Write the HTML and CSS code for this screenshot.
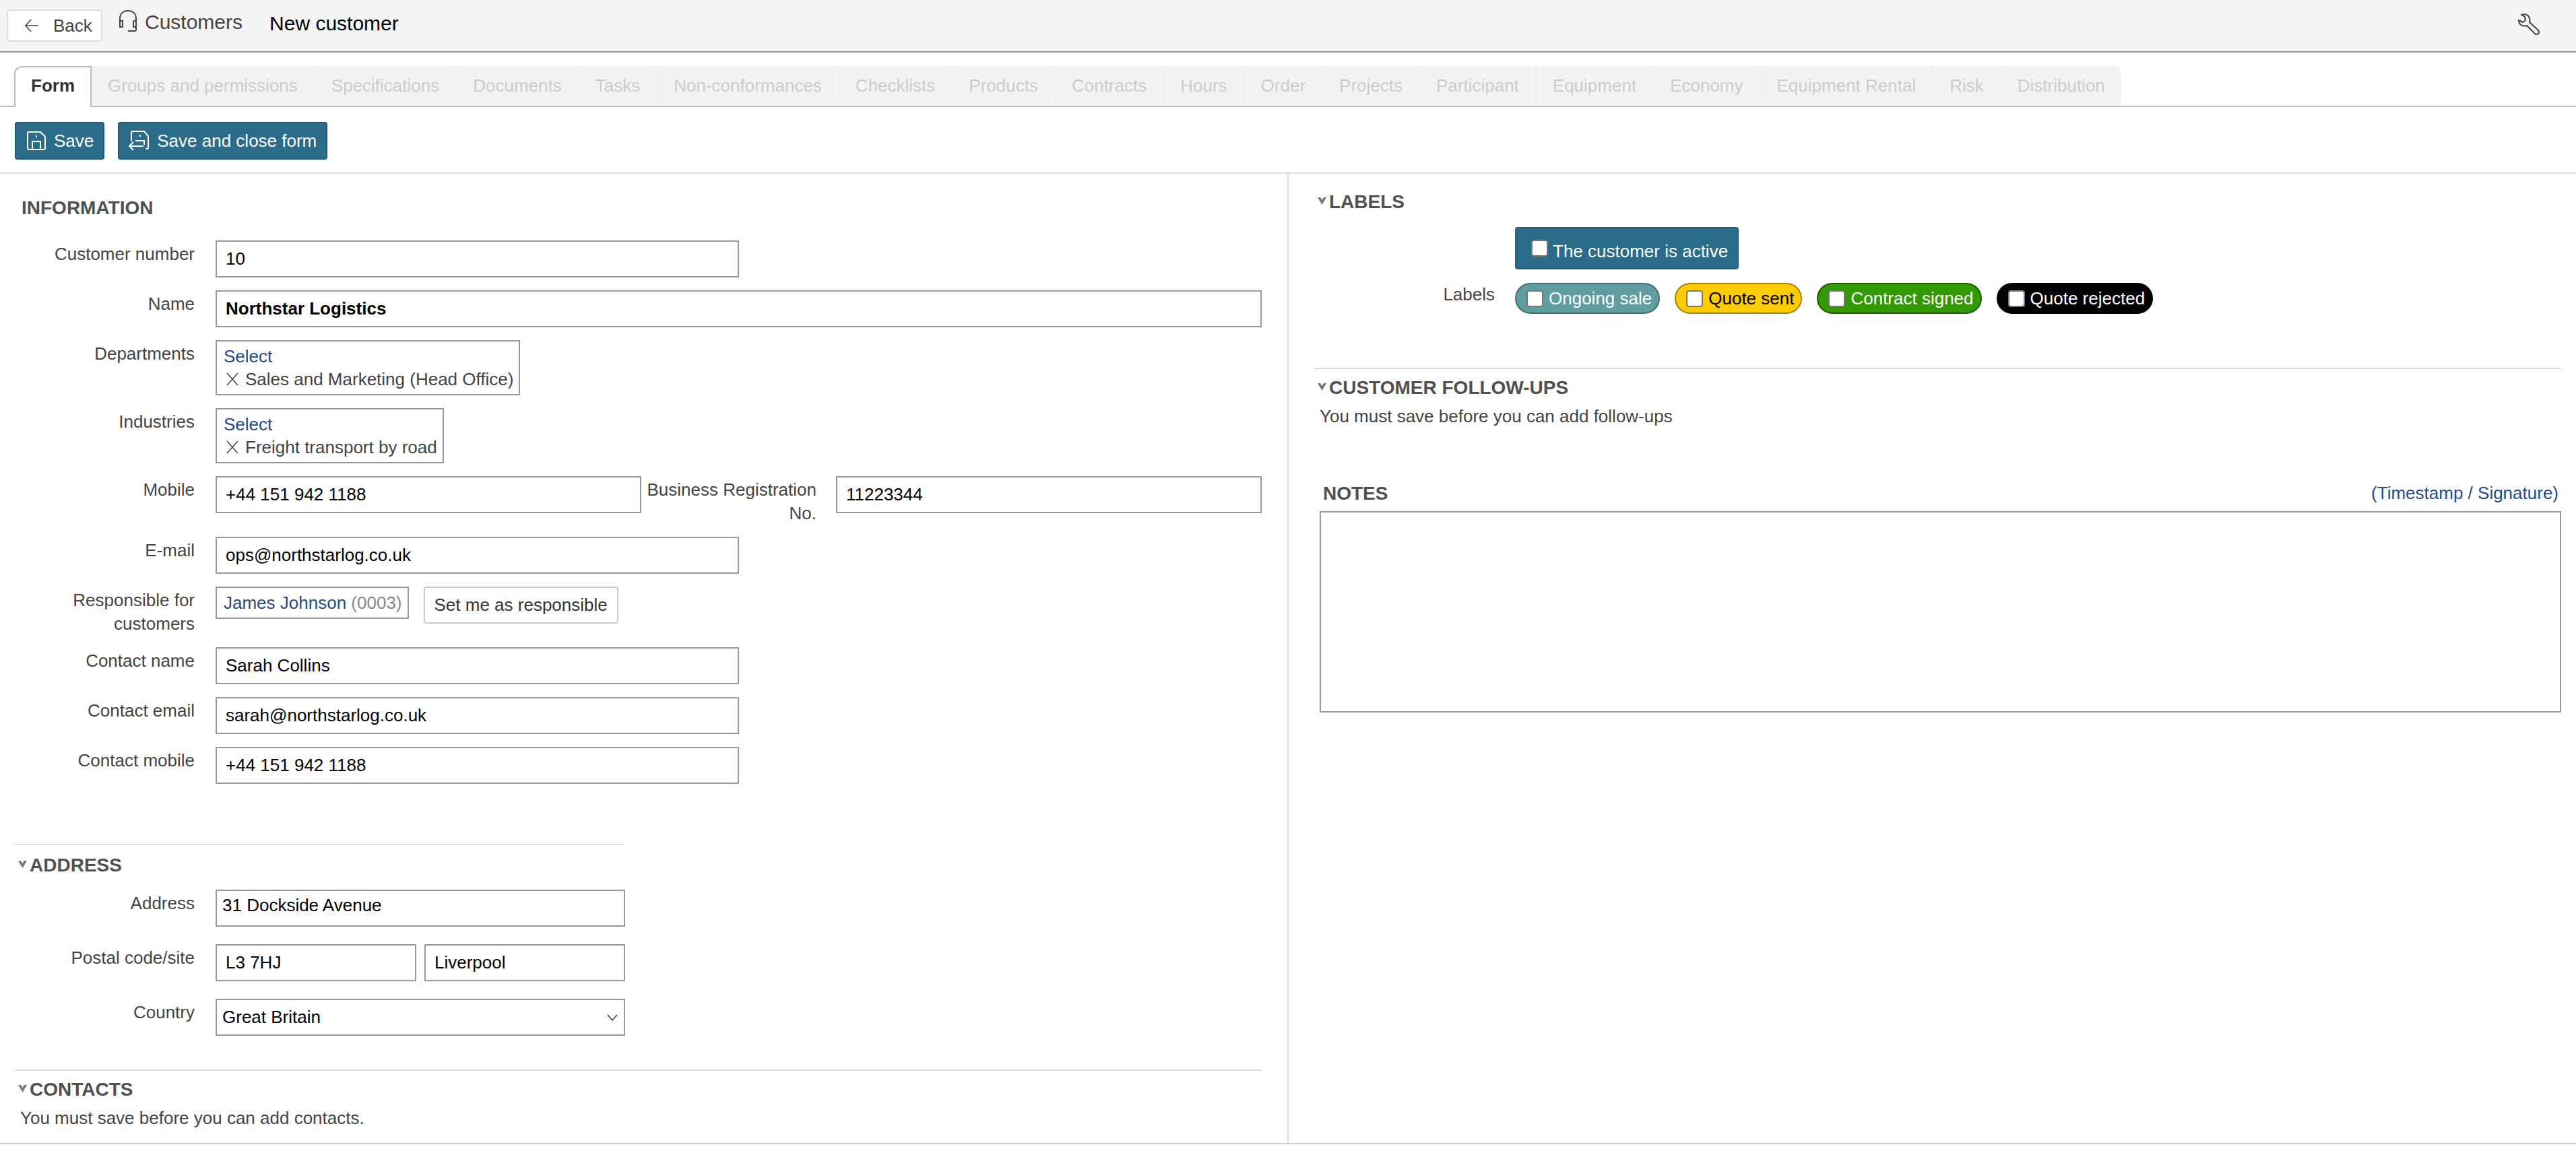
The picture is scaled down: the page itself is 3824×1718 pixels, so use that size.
FILE: index.html
```html
<!DOCTYPE html>
<html lang="en">
<head>
  <meta charset="UTF-8">
  <meta name="viewport" content="width=device-width, initial-scale=1.0">
  <title>New customer</title>
  <link rel="stylesheet" href="styles.css">
</head>
<body>
  <header class="topbar">
    <button class="back-btn">
      <svg class="icon-back" width="20" height="20" viewBox="0 0 20 20"><path d="M9 1 L1 10 L9 19 M1 10 H20" fill="none" stroke="#444" stroke-width="1.6"/></svg>
      Back
    </button>
    <svg class="icon-headset" width="28" height="32" viewBox="0 0 28 32"><path d="M2 16 V13 C2 5 7 1 14 1 C21 1 26 5 26 13 V16 M2 16 H6 V25 H2 Z M22 16 H26 V29 C26 30 25 31 24 31 H14" fill="none" stroke="#444" stroke-width="2"/><path d="M26 25 H22 V16" fill="none" stroke="#444" stroke-width="2"/></svg>
    <span class="module-title">Customers</span>
    <span class="page-title">New customer</span>
    <svg class="icon-wrench" width="32" height="32" viewBox="0 0 32 32"><path d="M1 10 L7 13 L11 10 L10 5 L5 2 C10 0 16 2 17 7 C18 10 17 12 17 13 L30 25 C32 27 31 29 30 30 C29 31 27 32 25 30 L13 18 C9 19 5 18 3 16 C1 14 1 12 1 10 Z" fill="none" stroke="#444" stroke-width="2" stroke-linejoin="round"/></svg>
  </header>

  <nav class="tabs">
    <a class="tab active">Form</a>
    <a class="tab">Groups and permissions</a>
    <a class="tab">Specifications</a>
    <a class="tab">Documents</a>
    <a class="tab">Tasks</a>
    <a class="tab">Non-conformances</a>
    <a class="tab">Checklists</a>
    <a class="tab">Products</a>
    <a class="tab">Contracts</a>
    <a class="tab">Hours</a>
    <a class="tab">Order</a>
    <a class="tab">Projects</a>
    <a class="tab">Participant</a>
    <a class="tab">Equipment</a>
    <a class="tab">Economy</a>
    <a class="tab">Equipment Rental</a>
    <a class="tab">Risk</a>
    <a class="tab">Distribution</a>
  </nav>

  <div class="toolbar">
    <button class="btn">
      <svg width="28" height="28" viewBox="0 0 28 28"><path d="M1 3 C1 2 2 1 3 1 H20 L27 8 V25 C27 26 26 27 25 27 H3 C2 27 1 26 1 25 Z M8 27 V15 H20 V27 M14 6 V9" fill="none" stroke="#fff" stroke-width="2"/></svg>
      Save
    </button>
    <button class="btn btn-close">
      <svg width="30" height="30" viewBox="0 0 30 30"><path d="M4 16 V3 C4 2 5 1 6 1 H23 L29 8 V25 C29 26 28 27 27 27 H25 M17 6 V9 M10 15 H23 V21 M1 23 H22 M7 17 L1 23 L7 29" fill="none" stroke="#fff" stroke-width="2"/></svg>
      Save and close form
    </button>
  </div>

  <main class="columns">
    <div class="col-left">
      <section class="info">
        <h2 class="heading heading-plain">INFORMATION</h2>
        <div class="row">
          <label class="lbl">Customer number</label>
          <input class="inp w-md" value="10">
        </div>
        <div class="row">
          <label class="lbl">Name</label>
          <input class="inp inp-bold" value="Northstar Logistics">
        </div>
        <div class="row">
          <label class="lbl">Departments</label>
          <div class="picker">
            <a class="link">Select</a>
            <div class="tag">
              <svg width="20" height="20" viewBox="0 0 20 20"><path d="M2 1 L18 19 M18 1 L2 19" stroke="#444" stroke-width="1.5"/></svg>
              Sales and Marketing (Head Office)
            </div>
          </div>
        </div>
        <div class="row">
          <label class="lbl">Industries</label>
          <div class="picker">
            <a class="link">Select</a>
            <div class="tag">
              <svg width="20" height="20" viewBox="0 0 20 20"><path d="M2 1 L18 19 M18 1 L2 19" stroke="#444" stroke-width="1.5"/></svg>
              Freight transport by road
            </div>
          </div>
        </div>
        <div class="row row-tight">
          <label class="lbl">Mobile</label>
          <div class="pair">
            <input class="inp" value="+44 151 942 1188">
            <label class="lbl">Business Registration No.</label>
            <input class="inp" value="11223344">
          </div>
        </div>
        <div class="row">
          <label class="lbl">E-mail</label>
          <input class="inp w-md" value="ops@northstarlog.co.uk">
        </div>
        <div class="row row-tight">
          <label class="lbl">Responsible for customers</label>
          <div class="responsible">
            <div class="picker"><a class="link">James Johnson</a> <span class="code">(0003)</span></div>
            <button class="plain-btn">Set me as responsible</button>
          </div>
        </div>
        <div class="row">
          <label class="lbl">Contact name</label>
          <input class="inp w-md" value="Sarah Collins">
        </div>
        <div class="row">
          <label class="lbl">Contact email</label>
          <input class="inp w-md" value="sarah@northstarlog.co.uk">
        </div>
        <div class="row">
          <label class="lbl">Contact mobile</label>
          <input class="inp w-md" value="+44 151 942 1188">
        </div>
      </section>

      <section class="address">
        <h2 class="heading">
          <svg class="chev" width="13" height="11" viewBox="0 0 13 11"><path d="M0 0 L4 0 L6.5 4 L9 0 L13 0 L6.5 11 Z" fill="#777"/></svg>
          ADDRESS
        </h2>
        <div class="row">
          <label class="lbl">Address</label>
          <input class="inp inp-street" value="31 Dockside Avenue">
        </div>
        <div class="row">
          <label class="lbl">Postal code/site</label>
          <div class="postal">
            <input class="inp" value="L3 7HJ">
            <input class="inp" value="Liverpool">
          </div>
        </div>
        <div class="row">
          <label class="lbl">Country</label>
          <select class="inp inp-select">
            <option>Great Britain</option>
          </select>
        </div>
      </section>

      <section class="contacts">
        <h2 class="heading">
          <svg class="chev" width="13" height="11" viewBox="0 0 13 11"><path d="M0 0 L4 0 L6.5 4 L9 0 L13 0 L6.5 11 Z" fill="#777"/></svg>
          CONTACTS
        </h2>
        <p class="note">You must save before you can add contacts.</p>
      </section>
    </div>

    <div class="col-right">
      <section class="labels">
        <h2 class="heading">
          <svg class="chev" width="13" height="11" viewBox="0 0 13 11"><path d="M0 0 L4 0 L6.5 4 L9 0 L13 0 L6.5 11 Z" fill="#777"/></svg>
          LABELS
        </h2>
        <label class="active-toggle"><input type="checkbox" class="chk">The customer is active</label>
        <div class="label-row">
          <span class="lbl lbl-labels">Labels</span>
          <div class="pills">
            <label class="pill pill-teal"><input type="checkbox" class="chk">Ongoing sale</label>
            <label class="pill pill-yellow"><input type="checkbox" class="chk">Quote sent</label>
            <label class="pill pill-green"><input type="checkbox" class="chk">Contract signed</label>
            <label class="pill pill-black"><input type="checkbox" class="chk">Quote rejected</label>
          </div>
        </div>
      </section>

      <section class="followups">
        <h2 class="heading">
          <svg class="chev" width="13" height="11" viewBox="0 0 13 11"><path d="M0 0 L4 0 L6.5 4 L9 0 L13 0 L6.5 11 Z" fill="#777"/></svg>
          CUSTOMER FOLLOW-UPS
        </h2>
        <p class="note">You must save before you can add follow-ups</p>
      </section>

      <section class="notes">
        <div class="notes-head">
          <h2 class="heading heading-plain">NOTES</h2>
          <a class="link">(Timestamp / Signature)</a>
        </div>
        <textarea class="notes-box"></textarea>
      </section>
    </div>
  </main>
</body>
</html>
```

FILE: styles.css
```css
:root {
  --accent: #2a6c8a;
  --accent-dark: #215a74;
  --line: #ddd;
  --field: #999;
  --link: #234a8a;
  --text: #444;
}
* {
  box-sizing: border-box;
}
body {
  margin: 0;
  background: #fff;
  color: var(--text);
  font-family: 'Liberation Sans', Arial, sans-serif;
  font-size: 26px;
  line-height: 35px;
}
button, input, select, textarea {
  font: inherit;
}

/* top bar */
.topbar {
  display: flex;
  align-items: flex-start;
  height: 78px;
  padding: 14px 54px 0 10px;
  background: #f4f4f4;
  border-bottom: 2px solid #999;
}
.back-btn {
  display: flex;
  align-items: center;
  gap: 22px;
  width: 142px;
  height: 48px;
  padding: 0 0 0 25px;
  background: #fff;
  border: 2px solid #ddd;
  border-radius: 4px;
  color: var(--text);
}
.icon-headset {
  margin: 1px 11px 0 24px;
}
.module-title {
  margin: 1px 40px 0 0;
  font-size: 30px;
  color: #444;
}
.page-title {
  margin-top: 3px;
  font-size: 30px;
  color: #000;
}
.icon-wrench {
  margin: 6px 0 0 auto;
}

/* tabs */
.tabs {
  display: flex;
  height: 61px;
  margin-top: 20px;
  padding-left: 21px;
  border-bottom: 2px solid #bbb;
}
.tab {
  height: 59px;
  padding: 12px 24px 0;
  background: #f3f3f3;
  border-right: 2px solid #eee;
  color: #ccc;
  white-space: nowrap;
}
.tab:last-child {
  border-right: 0;
  border-top-right-radius: 10px;
}
.tab.active {
  height: 61px;
  padding: 10px 23px 0;
  background: #fff;
  border: 2px solid #bbb;
  border-bottom: 0;
  border-top-left-radius: 12px;
  color: #333;
  font-weight: bold;
}

/* toolbar */
.toolbar {
  display: flex;
  gap: 20px;
  height: 99px;
  padding: 22px 0 0 22px;
  border-bottom: 2px solid var(--line);
}
.btn {
  display: flex;
  align-items: center;
  gap: 12px;
  height: 56px;
  padding: 0 14px 0 16px;
  background: var(--accent);
  border: 2px solid var(--accent-dark);
  border-radius: 4px;
  color: #fff;
}
.btn-close {
  padding-left: 14px;
}

/* columns */
.columns {
  display: grid;
  grid-template-columns: 1913px 1fr;
  height: 1441px;
  border-bottom: 2px solid #ccc;
}
.col-left {
  border-right: 2px solid var(--line);
}
.col-right {
  padding: 0 22px 0 38px;
}
.heading {
  display: flex;
  align-items: center;
  height: 35px;
  margin: 0;
  padding-left: 5px;
  font-size: 28px;
  color: #505050;
}
.chev {
  margin: -2px 4px 0 0;
}
.heading-plain {
  padding-left: 0;
}
.note {
  margin: 8px 0 0;
}

/* form rows */
.row {
  display: grid;
  grid-template-columns: 267px 1fr;
  column-gap: 31px;
  align-items: start;
  margin-bottom: 19px;
}
.row-tight {
  margin-bottom: 17px;
}
.lbl {
  padding-top: 3px;
  text-align: right;
  color: var(--text);
}
.inp {
  display: block;
  width: 100%;
  height: 55px;
  padding: 0 13px;
  background: #fff;
  border: 2px solid var(--field);
  border-radius: 0;
  color: #000;
  outline: none;
}
.inp-bold {
  font-weight: bold;
}
.w-md {
  width: 777px;
}
.picker {
  width: fit-content;
  padding: 5px 8px 5px 10px;
  border: 2px solid var(--field);
  line-height: 34px;
}
.link {
  color: var(--link);
}
.tag {
  display: flex;
  align-items: center;
  gap: 9px;
  padding-left: 3px;
  color: var(--text);
}
.pair {
  display: grid;
  grid-template-columns: 632px 260px 661px;
}
.pair .inp:last-child {
  margin-left: 29px;
  width: 632px;
}
.responsible {
  display: flex;
  align-items: flex-start;
  gap: 22px;
}
.code {
  color: #888;
}
.plain-btn {
  height: 55px;
  padding: 0 14px;
  background: #fff;
  border: 2px solid #ccc;
  border-radius: 4px;
  color: #333;
}

/* left sections */
.info {
  padding: 33px 38px 0 22px;
}
.info .heading {
  padding-left: 10px;
  margin-bottom: 31px;
}
.address {
  width: 906px;
  margin: 89px 0 0 22px;
  border-top: 2px solid var(--line);
}
.address .heading {
  margin: 12px 0 19px;
}
.address .row {
  margin-bottom: 26px;
}
.inp-street {
  padding: 0 8px 8px;
}
.postal {
  display: grid;
  grid-template-columns: 1fr 1fr;
  column-gap: 12px;
}
.inp-select {
  padding: 0 40px 0 8px;
  appearance: none;
  background: #fff url("data:image/svg+xml,%3Csvg xmlns='http://www.w3.org/2000/svg' width='16' height='10' viewBox='0 0 16 10'%3E%3Cpath d='M1 1 L8 9 L15 1' fill='none' stroke='%23333' stroke-width='1.4'/%3E%3C/svg%3E") no-repeat right 9px center;
}
.contacts {
  margin: 50px 38px 0 22px;
  border-top: 2px solid var(--line);
}
.contacts .heading {
  margin-top: 10px;
}
.contacts .note {
  padding-left: 8px;
}

/* right sections */
.labels .heading {
  margin: 24px 0 20px;
}
.chk {
  appearance: none;
  flex: none;
  width: 25px;
  height: 25px;
  margin: 0;
  background: #fff;
  border: 2px solid #767676;
  border-radius: 4px;
}
.active-toggle {
  display: flex;
  align-items: flex-start;
  gap: 7px;
  width: 332px;
  height: 63px;
  margin-left: 298px;
  padding: 17px 0 0 23px;
  background: var(--accent);
  border: 2px solid var(--accent-dark);
  border-width: 2px 1px;
  border-radius: 4px;
  color: #fff;
}
.label-row {
  display: grid;
  grid-template-columns: 268px 1fr;
  column-gap: 30px;
  margin-top: 20px;
}
.lbl-labels {
  padding-top: 0;
}
.pills {
  display: flex;
  gap: 22px;
}
.pill {
  display: flex;
  align-items: center;
  gap: 8px;
  height: 46px;
  padding: 0 10px 0 15px;
  border: 2px solid;
  border-radius: 23px;
}
.pill-teal {
  background: #5f9ea0;
  border-color: #446f71;
  color: #fff;
}
.pill-yellow {
  background: #fc0;
  border-color: #a68500;
  color: #000;
}
.pill-green {
  background: #390;
  border-color: #1f5c00;
  color: #fff;
}
.pill-black {
  background: #000;
  border-color: #000;
  color: #fff;
}
.followups {
  margin-top: 80px;
  border-top: 2px solid var(--line);
}
.followups .heading {
  margin-top: 10px;
}
.followups .note {
  padding-left: 8px;
}
.notes {
  margin-top: 79px;
  padding-left: 8px;
}
.notes-head {
  display: flex;
  justify-content: space-between;
  padding-right: 4px;
  margin-bottom: 9px;
}
.notes-head .heading {
  padding-left: 5px;
}
.notes-box {
  display: block;
  width: 100%;
  height: 299px;
  border: 2px solid var(--field);
  border-radius: 0;
  resize: none;
  outline: none;
}
```
